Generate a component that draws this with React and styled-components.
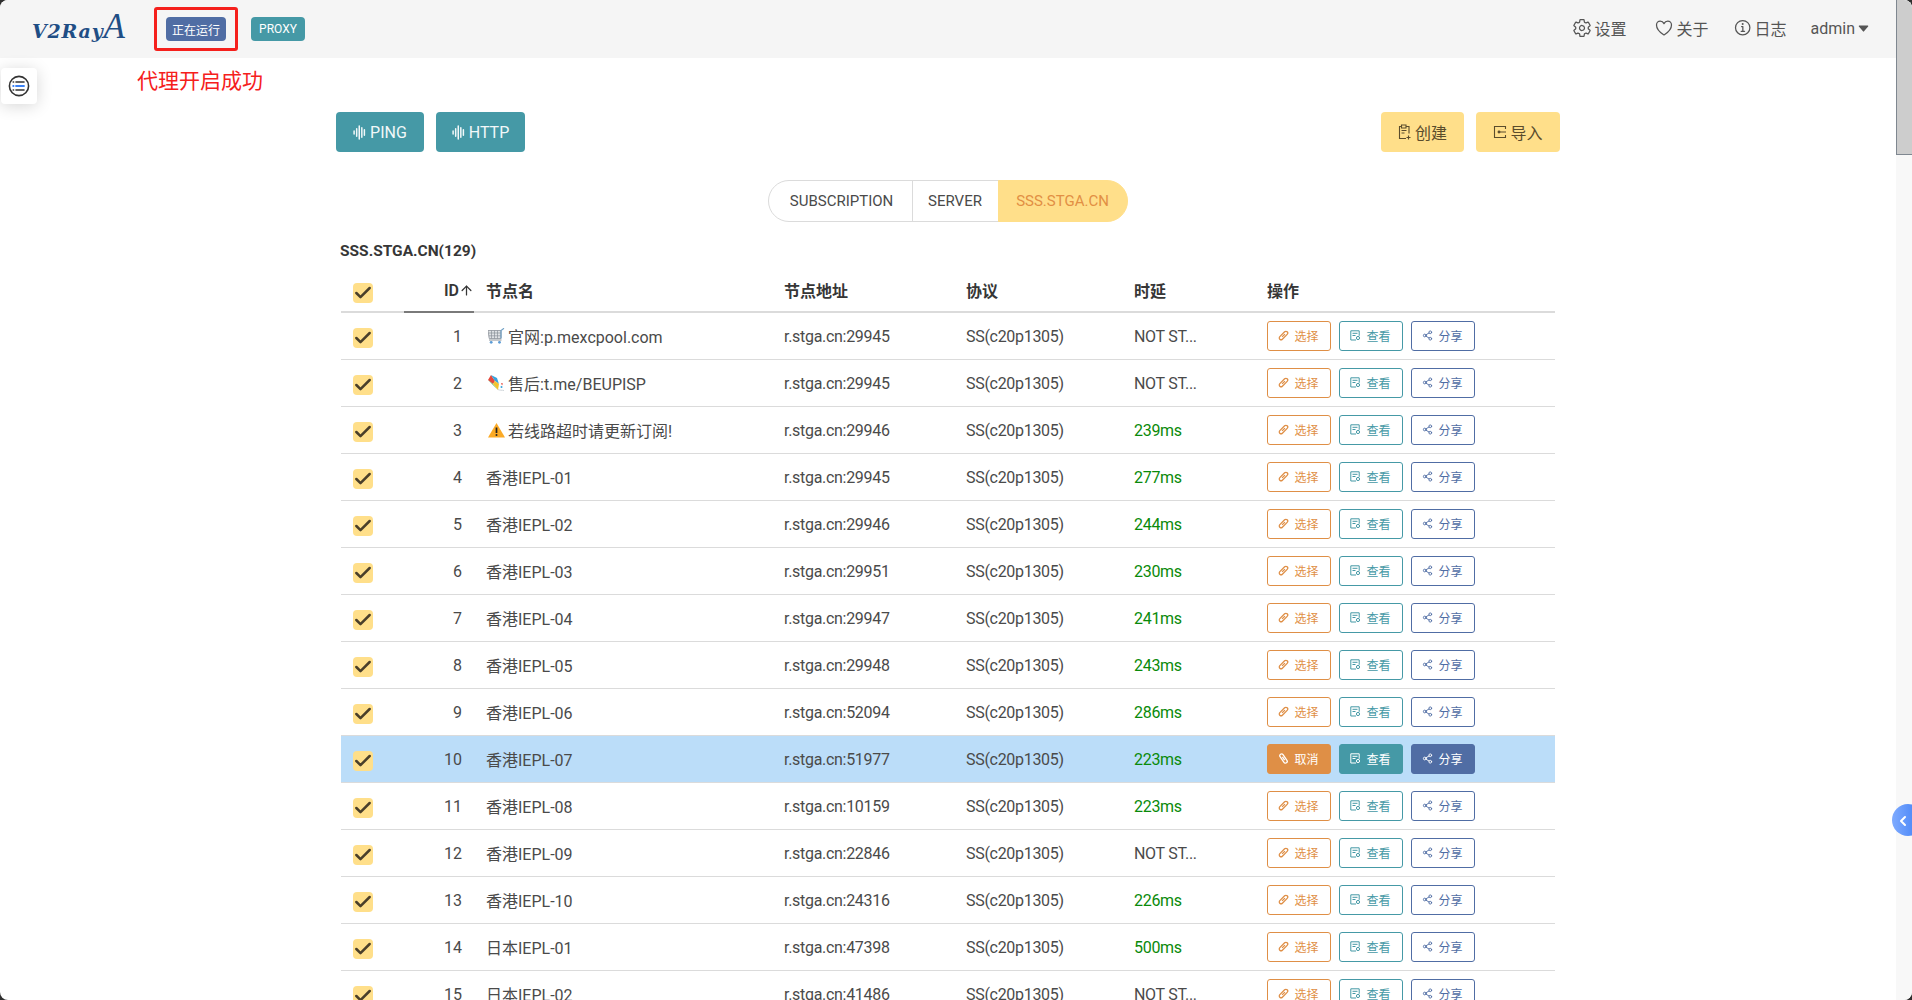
import React from 'react'
import styled, { createGlobalStyle } from 'styled-components'
import { IoSettingsOutline, IoHeartOutline, IoInformationCircleOutline, IoCaretDown } from 'react-icons/io5'
import { ChevronLeft, ArrowUp, Check, Share2 } from 'lucide-react'

const Global = createGlobalStyle`
  html, body { margin: 0; height: 100%; overflow: hidden; background: #2f2f2f; }
  * { box-sizing: border-box; }
  body {
    font-family: Roboto, "Noto Sans CJK SC", sans-serif;
    font-size: 16px;
    color: #4a4a4a;
  }
`

const Window = styled.div`
  position: relative;
  display: flex;
  width: 1912px;
  height: 1000px;
  overflow: hidden;
  border-radius: 8px;
  background: #fff;
`
const Main = styled.div`
  flex: 1;
  min-width: 0;
`
const ScrollTrack = styled.div`
  width: 16px;
  background: #f8f8f8;
`
const ScrollThumb = styled.div`
  height: 155px;
  background: #cdcdcd;
  border-left: 1px solid #7f8790;
  border-bottom: 1px solid #7f8790;
`

const Navbar = styled.nav`
  display: flex;
  align-items: center;
  height: 58px;
  padding: 0 25px 0 32px;
  background: #f5f5f5;
`
const Logo = styled.div`
  display: flex;
  align-items: baseline;
  width: 122px;
  padding-bottom: 4px;
  font-family: "DejaVu Serif", serif;
  font-style: italic;
  font-weight: 700;
  font-size: 19px;
  letter-spacing: .8px;
  color: #1f4e85;
`
const LogoA = styled.span`
  font-family: "Liberation Serif", serif;
  font-weight: 400;
  font-size: 35px;
  letter-spacing: 0;
`
const Marked = styled.div`
  display: flex;
  align-items: center;
  justify-content: center;
  width: 84px;
  height: 44px;
  margin-right: 13px;
  border: 3px solid #f5201c;
  border-radius: 3px;
`
const Tag = styled.span`
  display: inline-flex;
  align-items: center;
  justify-content: center;
  width: ${p => p.$w}px;
  height: 24px;
  border-radius: 4px;
  font-size: 12px;
  color: #fff;
  background: ${p => p.$bg};
`
const NavRight = styled.div`
  display: flex;
  align-items: center;
  margin-left: auto;
  padding-bottom: 2px;
  color: #555;
`
const NavItem = styled.a`
  display: flex;
  align-items: center;
  gap: ${p => p.$gap}px;
  margin-left: ${p => p.$left}px;
  svg { font-size: ${p => p.$icon || 20}px; }
`
const Notice = styled.div`
  height: 44px;
  padding: 10px 0 0 137px;
  font-size: 21px;
  line-height: 26px;
  color: #f5201c;
`
const SideButton = styled.button`
  position: absolute;
  left: 1px;
  top: 68px;
  width: 36px;
  height: 36px;
  padding: 0;
  display: flex;
  align-items: center;
  justify-content: center;
  background: #fff;
  border: 0;
  border-radius: 4px;
  box-shadow: 0 2px 16px rgba(0, 0, 0, .16);
`
const EdgeTab = styled.div`
  position: absolute;
  right: -12px;
  top: 804px;
  width: 32px;
  height: 32px;
  padding: 1px 0 0 3px;
  display: flex;
  align-items: center;
  border-radius: 50%;
  color: #fff;
  background: linear-gradient(90deg, #7fabff, #3a7bf5);
`
const Toolbar = styled.div`
  display: flex;
  justify-content: space-between;
  padding: 10px 336px 0;
`
const Group = styled.div`
  display: flex;
  gap: 12px;
`
const ToolButton = styled.button`
  display: flex;
  align-items: center;
  justify-content: center;
  gap: 3px;
  width: ${p => p.$w}px;
  height: 40px;
  padding: 0;
  border: 0;
  border-radius: 4px;
  font: inherit;
  color: ${p => p.$warm ? '#5a4c2c' : '#f2f8f9'};
  background: ${p => p.$warm ? '#ffdf8a' : '#4599a6'};
`
const TabsRow = styled.div`
  display: flex;
  justify-content: center;
  margin-top: 28px;
`
const Tab = styled.a`
  display: flex;
  align-items: center;
  justify-content: center;
  width: ${p => p.$w}px;
  height: 42px;
  font-size: 15px;
  color: ${p => p.$active ? '#e28f44' : '#4a4a4a'};
  background: ${p => p.$active ? '#ffdf8a' : '#fff'};
  border: 1px solid ${p => p.$active ? '#ffdf8a' : '#dbdbdb'};
  margin-left: -1px;
  &:first-child { border-radius: 21px 0 0 21px; padding-left: 3px; }
  &:last-child { border-radius: 0 21px 21px 0; }
`
const Content = styled.div`
  padding: 18px 0 0 340px;
`
const Title = styled.div`
  font-weight: 700;
  font-size: 15.500px;
  line-height: 22px;
  color: #363636;
`
const Table = styled.table`
  table-layout: fixed;
  width: 1214px;
  margin: 7px 0 0 1px;
  border-collapse: separate;
  border-spacing: 0;
  color: #4a4a4a;
`
const Th = styled.th`
  height: 44px;
  padding: 0 ${p => p.$sorted ? 0 : 12}px 0 12px;
  text-align: ${p => p.$right ? 'right' : 'left'};
  font-weight: 600;
  color: #363636;
  border-bottom: 2px solid ${p => p.$sorted ? '#7a7a7a' : '#dbdbdb'};
  svg { vertical-align: -2px; }
`
const Td = styled.td`
  height: 47px;
  padding: 0 12px;
  text-align: ${p => p.$right ? 'right' : 'left'};
  white-space: nowrap;
  letter-spacing: ${p => p.$tight ? '-.3px' : 'normal'};
  border-bottom: 1px solid #dbdbdb;
  color: ${p => p.$ok ? '#0a8a0a' : 'inherit'};
`
const Row = styled.tr`
  background: ${p => p.$on ? '#bbddf9' : 'transparent'};
`
const NameCell = styled.span`
  display: inline-flex;
  align-items: center;
  gap: 3px;
  margin-left: 2px;
`
const Box = styled.span`
  display: flex;
  align-items: center;
  justify-content: center;
  width: 20px;
  height: 20px;
  margin-top: ${p => p.$head ? 6 : 4}px;
  border-radius: 4px;
  color: #4a3f2a;
  background: #ffdf8a;
  svg { flex-shrink: 0; }
`
const Actions = styled.div`
  display: flex;
  gap: 8px;
`
const ActionButton = styled.button`
  display: flex;
  align-items: center;
  justify-content: center;
  gap: 5px;
  width: 64px;
  height: 30px;
  padding: 0 1px 1px 0;
  border: 1px solid ${p => p.$color};
  border-radius: 3px;
  font: inherit;
  font-size: 12px;
  color: ${p => p.$solid ? '#fff' : p.$color};
  background: ${p => p.$solid ? p.$color : '#fff'};
`

const WaveIcon = () => (
  <svg width="14" height="15" viewBox="0 0 13 14" fill="none" stroke="currentColor" strokeWidth="1.4" strokeLinecap="round">
    <path d="M1 5.5v3M3.4 3.5v7M5.8 1v12M8.2 2.5v9M10.6 4.5v5" />
  </svg>
)
const CreateIcon = () => (
  <svg width="14" height="16" viewBox="0 0 14 16" fill="none" stroke="currentColor" strokeWidth="1.1">
    <path d="M8 14.5H1.5V2.5h2M8 2.5h3v7M3.5 1h4.5v3H3.5zM3.5 6.5h5M3.5 9h3M10.5 11.5v4M8.5 13.5h4" />
  </svg>
)
const ImportIcon = () => (
  <svg width="14" height="14" viewBox="0 0 14 14" fill="none" stroke="currentColor" strokeWidth="1.1">
    <path d="M12.5 4V1.5h-11v11h11V10M13 7H6" />
    <circle cx="6" cy="7" r=".9" fill="currentColor" />
  </svg>
)
const ViewIcon = () => (
  <svg width="11" height="11" viewBox="0 0 11 11" fill="none" stroke="currentColor" strokeWidth="1">
    <path d="M6 10H.8V.8h8.4v5M2.5 3.3h5M2.5 5.5h3" />
    <circle cx="8" cy="8" r="1.6" />
  </svg>
)
// the node link icon: a narrow chain leaning right, or leaning left once selected
const LinkIcon = ({ on }) => (
  <svg width="11" height="11" viewBox="0 0 11 11" fill="none" stroke="currentColor" strokeWidth="1.3">
    <g transform={`rotate(${on ? -35 : 45} 5.5 5.5)`}>
      <rect x="3.7" y=".3" width="3.6" height="10.4" rx="1.8" />
      <path d="M5.5 3.5v4" />
    </g>
  </svg>
)
const SideIcon = () => (
  <svg width="22" height="22" viewBox="0 0 22 22" fill="none" strokeWidth="1.6" strokeLinecap="round">
    <circle cx="11" cy="11" r="9.6" stroke="#333" />
    <path d="M8 7h8M8 15h8" stroke="#333" />
    <path d="M8 11h8" stroke="#3b82f6" strokeWidth="1.8" />
    <path d="M5.2 7h.4M5.2 15h.4" stroke="#333" />
    <path d="M5.2 11h.4" stroke="#3b82f6" strokeWidth="1.8" />
  </svg>
)
const CartEmoji = () => (
  <svg width="17" height="16" viewBox="0 0 17 16" fill="none">
    <path d="M0 2.5h13v8H1.2z" fill="#dfe2e5" stroke="#8b9299" strokeWidth=".8" />
    <path d="M3.5 2.5v8M6.5 2.5v8M9.5 2.5v8M.5 5h12.5M.8 7.8h12.2" stroke="#8b9299" strokeWidth=".7" />
    <path d="M13 10.5v-8L16 .3" stroke="#6f9fc4" strokeWidth="1.2" />
    <path d="M1 12h12.5" stroke="#8b9299" strokeWidth="1" />
    <circle cx="3.2" cy="14.3" r="1.4" fill="#5b9bd5" />
    <circle cx="11.5" cy="14.3" r="1.4" fill="#5b9bd5" />
  </svg>
)
const KiteEmoji = () => (
  <svg width="17" height="16" viewBox="0 0 17 16">
    <path d="M0 5 3 0l4 6-2 3z" fill="#e5483c" />
    <path d="M3 0l6 3 2 6-4-3z" fill="#37a4dd" />
    <path d="M0 5l5 4 5 6z" fill="#4bb05a" />
    <path d="M7 6l4 3-1 6-5-6z" fill="#f2c230" />
    <path d="M10 14.5c1.5 1 4 .5 6 1" stroke="#cfd5da" fill="none" />
    <path d="M13 8l2 .5-1 2z" fill="#e5483c" />
    <circle cx="13.5" cy="12" r="1" fill="#37a4dd" />
  </svg>
)
const WarnEmoji = () => (
  <svg width="17" height="16" viewBox="0 0 17 16">
    <path d="M8.5 1 17 15.5H0z" fill="#fbaa26" />
    <path d="M8.5 5.5v5.5" stroke="#222" strokeWidth="1.7" />
    <circle cx="8.5" cy="13" r="1" fill="#222" />
  </svg>
)

const ORANGE = '#df8f46'
const TEAL = '#4599a6'
const BLUE = '#506da4'

const SLOW = 'NOT ST...'
const rows = [
  [1, <NameCell><CartEmoji />官网:p.mexcpool.com</NameCell>, 29945, SLOW],
  [2, <NameCell><KiteEmoji />售后:t.me/BEUPISP</NameCell>, 29945, SLOW],
  [3, <NameCell><WarnEmoji />若线路超时请更新订阅!</NameCell>, 29946, '239ms'],
  [4, '香港IEPL-01', 29945, '277ms'],
  [5, '香港IEPL-02', 29946, '244ms'],
  [6, '香港IEPL-03', 29951, '230ms'],
  [7, '香港IEPL-04', 29947, '241ms'],
  [8, '香港IEPL-05', 29948, '243ms'],
  [9, '香港IEPL-06', 52094, '286ms'],
  [10, '香港IEPL-07', 51977, '223ms'],
  [11, '香港IEPL-08', 10159, '223ms'],
  [12, '香港IEPL-09', 22846, SLOW],
  [13, '香港IEPL-10', 24316, '226ms'],
  [14, '日本IEPL-01', 47398, '500ms'],
  [15, '日本IEPL-02', 41486, SLOW],
]

export default function App() {
  return (
    <Window>
      <Global />
      <Main>
        <Navbar>
          <Logo>V2Ray<LogoA>A</LogoA></Logo>
          <Marked><Tag $bg={BLUE} $w={60}>正在运行</Tag></Marked>
          <Tag $bg={TEAL} $w={54}>PROXY</Tag>
          <NavRight>
            <NavItem $left={0} $gap={2}><IoSettingsOutline />设置</NavItem>
            <NavItem $left={28} $gap={2}><IoHeartOutline />关于</NavItem>
            <NavItem $left={24} $gap={2}><IoInformationCircleOutline />日志</NavItem>
            <NavItem $left={24} $gap={1} $icon={15}>admin<IoCaretDown /></NavItem>
          </NavRight>
        </Navbar>
        <Notice>代理开启成功</Notice>
        <Toolbar>
          <Group>
            <ToolButton $w={88}><WaveIcon />PING</ToolButton>
            <ToolButton $w={89}><WaveIcon />HTTP</ToolButton>
          </Group>
          <Group>
            <ToolButton $warm $w={83}><CreateIcon />创建</ToolButton>
            <ToolButton $warm $w={84}><ImportIcon />导入</ToolButton>
          </Group>
        </Toolbar>
        <TabsRow>
          <Tab $w={145}>SUBSCRIPTION</Tab>
          <Tab $w={87}>SERVER</Tab>
          <Tab $w={130} $active>SSS.STGA.CN</Tab>
        </TabsRow>
        <Content>
          <Title>SSS.STGA.CN(129)</Title>
          <Table>
            <colgroup>
              <col width="63" /><col width="70" /><col width="298" /><col width="182" />
              <col width="168" /><col width="133" /><col width="300" />
            </colgroup>
            <thead>
              <tr>
                <Th><Box $head><Check size={20} strokeWidth={3} /></Box></Th>
                <Th $right $sorted>ID<ArrowUp size={15} strokeWidth={2} /></Th>
                <Th>节点名</Th>
                <Th>节点地址</Th>
                <Th>协议</Th>
                <Th>时延</Th>
                <Th>操作</Th>
              </tr>
            </thead>
            <tbody>
              {rows.map(([id, name, port, delay]) => {
                const on = id === 10
                return (
                  <Row key={id} $on={on}>
                    <Td><Box><Check size={20} strokeWidth={3} /></Box></Td>
                    <Td $right>{id}</Td>
                    <Td>{name}</Td>
                    <Td $tight>r.stga.cn:{port}</Td>
                    <Td $tight>SS(c20p1305)</Td>
                    <Td $tight $ok={delay !== SLOW}>{delay}</Td>
                    <Td>
                      <Actions>
                        <ActionButton $color={ORANGE} $solid={on}><LinkIcon on={on} />{on ? '取消' : '选择'}</ActionButton>
                        <ActionButton $color={TEAL} $solid={on}><ViewIcon />查看</ActionButton>
                        <ActionButton $color={BLUE} $solid={on}><Share2 size={11} />分享</ActionButton>
                      </Actions>
                    </Td>
                  </Row>
                )
              })}
            </tbody>
          </Table>
        </Content>
      </Main>
      <ScrollTrack><ScrollThumb /></ScrollTrack>
      <SideButton><SideIcon /></SideButton>
      <EdgeTab><ChevronLeft size={16} strokeWidth={3} /></EdgeTab>
    </Window>
  )
}
